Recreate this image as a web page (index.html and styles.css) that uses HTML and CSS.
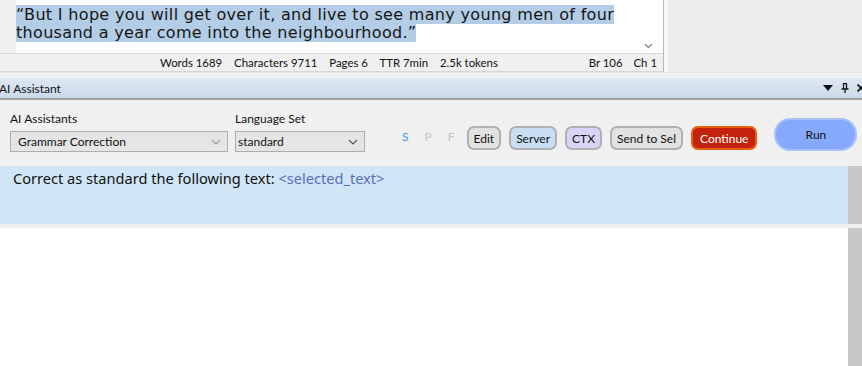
FILE: index.html
```html
<!DOCTYPE html>
<html>
<head>
    <title>AI Assistant</title>
    <link rel="stylesheet" href="styles.css">
</head>
<body>
    <div class="editor-area">
        <div class="editor-pane">
            <div class="editor-body">
                <div class="gutter"></div>
                <div class="editor-text">
                    <span class="sel">“But I hope you will get over it, and live to see many young men of four </span><br>
                    <span class="sel">thousand a year come into the neighbourhood.”</span>
                </div>
                <div class="vscroll">
                    <svg width="9" height="6" viewBox="0 0 9 6"><path d="M1 1 L4.5 4.5 L8 1" fill="none" stroke="#8a8a8a" stroke-width="1.4"/></svg>
                </div>
            </div>
            <div class="statusbar">
                <span class="st-left">
                    <span>Words 1689</span>
                    <span>Characters 9711</span>
                    <span>Pages 6</span>
                    <span>TTR 7min</span>
                    <span>2.5k tokens</span>
                </span>
                <span class="st-right">
                    <span>Br 106</span>
                    <span>Ch 1</span>
                </span>
            </div>
        </div>
        <div class="editor-side"></div>
    </div>

    <div class="panel-title">
        <span class="title-text">AI Assistant</span>
        <span class="title-icons">
            <svg width="10" height="6" viewBox="0 0 10 6"><path d="M0 0 H10 L5 6 Z" fill="#111"/></svg>
            <svg width="8" height="10" viewBox="0 0 8 10"><path d="M2 0.5 H6 M2.5 0.5 V6 M5.5 0.5 V6 M0.5 6 H7.5 M4 6 V10" fill="none" stroke="#111" stroke-width="1.3"/></svg>
            <svg width="8" height="8" viewBox="0 0 8 8"><path d="M0.5 0.5 L7.5 7.5 M7.5 0.5 L0.5 7.5" fill="none" stroke="#111" stroke-width="1.6"/></svg>
        </span>
    </div>

    <div class="toolbar">
        <div class="field">
            <label>AI Assistants</label>
            <div class="combo combo-wide">
                <span>Grammar Correction</span>
                <svg width="10" height="6" viewBox="0 0 10 6"><path d="M1 1 L5 5 L9 1" fill="none" stroke="#999" stroke-width="1.2"/></svg>
            </div>
        </div>
        <div class="field">
            <label>Language Set</label>
            <div class="combo combo-lang">
                <span>standard</span>
                <svg width="10" height="6" viewBox="0 0 10 6"><path d="M1 1 L5 5 L9 1" fill="none" stroke="#555" stroke-width="1.2"/></svg>
            </div>
        </div>
        <div class="flags">
            <span class="flag on">S</span>
            <span class="flag">P</span>
            <span class="flag">F</span>
        </div>
        <div class="buttons">
            <button class="btn">Edit</button>
            <button class="btn btn-server">Server</button>
            <button class="btn btn-ctx">CTX</button>
            <button class="btn">Send to Sel</button>
            <button class="btn btn-continue">Continue</button>
        </div>
        <button class="btn-run">Run</button>
    </div>

    <div class="prompt-row">
        <div class="prompt">Correct as standard the following text: <span class="placeholder">&lt;selected_text&gt;</span></div>
        <div class="side-scroll"></div>
    </div>
    <div class="gap-row">
        <div class="gap"></div>
    </div>
    <div class="output-row">
        <div class="output"></div>
        <div class="side-scroll"></div>
    </div>
</body>
</html>
```

FILE: styles.css
```css
body {
    margin: 0;
    width: 862px;
    height: 366px;
    overflow: hidden;
    background-color: #f0f0f0;
    font-family: Lato, "Noto Sans", sans-serif;
    color: #111;
}
.editor-area {
    display: flex;
    height: 72px;
    border-bottom: 1px solid #e4e4e4;
    background-color: #f7f7f7;
}
.editor-pane {
    width: 663px;
    border-right: 1px solid #b8b8b8;
    display: flex;
    flex-direction: column;
    background-color: #fff;
}
.editor-body {
    display: flex;
    height: 53px;
}
.gutter {
    width: 16px;
    background-color: #f0f0f0;
}
.editor-text {
    flex: 1;
    padding-top: 6px;
    font-family: "DejaVu Sans", Verdana, sans-serif;
    font-size: 16px;
    letter-spacing: 0.32px;
    line-height: 17.5px;
    color: #151515;
    white-space: nowrap;
}
.sel {
    background-color: #b3cde6;
}
.vscroll {
    width: 17px;
    display: flex;
    align-items: flex-end;
    justify-content: center;
    padding-bottom: 4px;
    margin-right: 6px;
    box-sizing: border-box;
}
.statusbar {
    height: 17px;
    border-top: 1px solid #d7d7d7;
    border-bottom: 1px solid #d7d7d7;
    background-color: #f0f0f0;
    display: flex;
    justify-content: space-between;
    font-size: 11.4px;
    line-height: 17px;
    padding-left: 160px;
    padding-right: 6px;
}
.st-left span {
    margin-right: 9px;
}
.st-right span {
    margin-left: 8px;
}
.editor-side {
    flex: 1;
    background-color: #efecec;
    margin-left: 4px;
}
.panel-title {
    margin-top: 5px;
    height: 20px;
    background: linear-gradient(#dfe8f2, #cad9ea);
    border-bottom: 2px solid #a0a0a0;
    display: flex;
    align-items: center;
    justify-content: space-between;
    font-size: 12px;
}
.title-text {
    margin-left: -1px;
}
.title-icons {
    display: flex;
    align-items: center;
    gap: 8px;
    margin-right: -3px;
}
.toolbar {
    display: flex;
    align-items: flex-start;
    height: 66px;
    padding-left: 10px;
    box-sizing: border-box;
}
.field {
    display: flex;
    flex-direction: column;
    margin-top: 11px;
    margin-right: 7px;
}
.field label {
    font-size: 12px;
    line-height: 15px;
    margin-bottom: 5px;
}
.combo {
    height: 21px;
    border: 1px solid #adadad;
    background-color: #e5e5e5;
    display: flex;
    align-items: center;
    justify-content: space-between;
    padding: 0 6px 0 7px;
    box-sizing: border-box;
    font-size: 12px;
}
.combo-wide {
    width: 218px;
}
.combo-lang {
    width: 130px;
    padding-left: 2px;
}
.flags {
    display: flex;
    gap: 16px;
    margin-left: 30px;
    margin-top: 29px;
    font-size: 12px;
}
.flag {
    color: #c4c4c4;
}
.flag.on {
    color: #4c9be2;
}
.buttons {
    display: flex;
    gap: 8px;
    margin-left: 12px;
    margin-top: 26px;
}
.btn {
    height: 24px;
    padding: 0 5px;
    border: 2px solid #b0b0b0;
    border-radius: 7px;
    background-color: #e2e2e2;
    font-family: Lato, "Noto Sans", sans-serif;
    font-size: 12px;
    color: #111;
    white-space: nowrap;
}
.btn-server {
    background-color: #c8dff3;
}
.btn-ctx {
    background-color: #dad3f7;
}
.btn-continue {
    padding: 0 7px;
    background-color: #c3220d;
    border-color: #e5600d;
    color: #fff;
}
.btn-run {
    margin-left: 17px;
    margin-top: 18px;
    width: 83px;
    height: 33px;
    border: 2px solid #a9c2fb;
    border-radius: 16px;
    background-color: #86a9fd;
    font-family: Lato, "Noto Sans", sans-serif;
    font-size: 12px;
    color: #111;
    padding-bottom: 2px;
}
.prompt-row, .output-row, .gap-row {
    display: flex;
}
.prompt {
    flex: 1;
    height: 58px;
    background-color: #d0e6f6;
    padding: 2px 13px;
    box-sizing: border-box;
    font-family: "Noto Sans", "Open Sans", sans-serif;
    font-size: 14.6px;
    color: #111;
}
.placeholder {
    color: #5a6cbf;
}
.side-scroll {
    width: 14px;
    background-color: #c8c8c8;
}
.gap {
    height: 4px;
}
.output {
    flex: 1;
    height: 139px;
    background-color: #fff;
}
```
